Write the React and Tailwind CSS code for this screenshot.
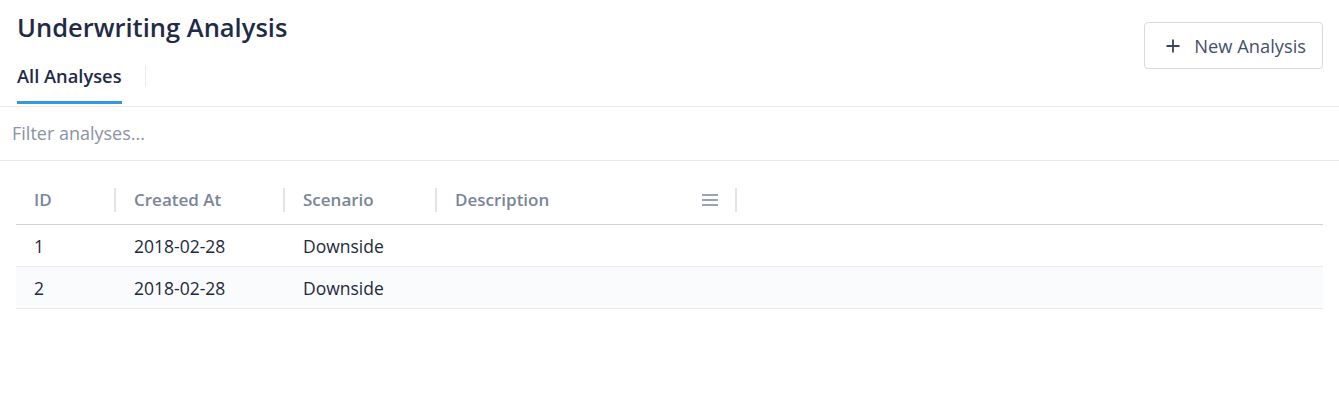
import { Plus } from "lucide-react"

const columns = [
  { key: "id", label: "ID", width: "w-[100px]" },
  { key: "createdAt", label: "Created At", width: "w-[169px]" },
  { key: "scenario", label: "Scenario", width: "w-[152px]" },
  { key: "description", label: "Description", width: "w-[300px]", menu: true },
]

const rows = [
  { id: 1, createdAt: "2018-02-28", scenario: "Downside", description: "" },
  { id: 2, createdAt: "2018-02-28", scenario: "Downside", description: "" },
]

const App = () => {
  return (
    <div className="w-[1339px] h-[403px] bg-white font-['Open_Sans',sans-serif] text-[#1e2a3b]">
      {/* Header */}
      <div className="flex justify-between border-b border-[#e9e9ef] pl-[17px] pr-[16px]">
        <div className="pb-[2px]">
          <h1 className="pt-[10px] text-[25.5px] font-semibold leading-[34px] text-[#1f2b48]">
            Underwriting Analysis
          </h1>
          <div className="flex items-center mt-[19px]">
            <div className="border-b-[3px] border-[#3498db] pb-[12px] text-[18.3px] font-semibold leading-[26px] text-[#1f2b48]">
              All Analyses
            </div>
            <div className="ml-[23px] mb-[15px] h-[22px] w-px bg-[#ececf0]" />
          </div>
        </div>
        <div className="pt-[22px]">
          <button className="flex items-center gap-[11px] h-[47px] rounded-[4px] border border-[#d6d9df] pl-[18px] pr-[16px] text-[18.3px] text-[#44506a]">
            <Plus className="w-[20px] h-[20px] text-[#3a4660]" strokeWidth={2.2} />
            New Analysis
          </button>
        </div>
      </div>

      {/* Filter */}
      <div className="border-b border-[#e9e9ef] h-[54px] flex items-center pl-[12px]">
        <input
          className="w-full outline-none text-[18px] placeholder:text-[#8a93a5]"
          placeholder="Filter analyses..."
        />
      </div>

      {/* Table */}
      <div className="mt-[15px] mx-[16px]">
        <div className="flex items-center h-[49px] border-b border-[#d2d2d2]">
          {columns.map((col) => (
            <div key={col.key} className={`${col.width} flex items-center`}>
              <div className="flex-1 flex items-center justify-between pl-[18px] pr-[16px] h-[24px] text-[17px] font-semibold text-[#7b8598]">
                {col.label}
                {col.menu && (
                  <svg className="w-[18px] h-[14px]" viewBox="0 0 18 14" fill="none" stroke="#7b8598" strokeWidth="1.6">
                    <path d="M1 2h16M1 7h16M1 12h16" />
                  </svg>
                )}
              </div>
              <div className="w-[2px] h-[24px] bg-[#e4e4e4]" />
            </div>
          ))}
        </div>
        {rows.map((row, i) => (
          <div
            key={row.id}
            className={`flex h-[42px] items-center border-b border-[#ebebef] text-[17.5px] ${i % 2 === 1 ? "bg-[#fafbfd]" : "bg-white"}`}
          >
            {columns.map((col) => (
              <div key={col.key} className={`${col.width} pl-[18px] pt-[1px]`}>
                {row[col.key]}
              </div>
            ))}
          </div>
        ))}
      </div>
    </div>
  )
}

export default App
